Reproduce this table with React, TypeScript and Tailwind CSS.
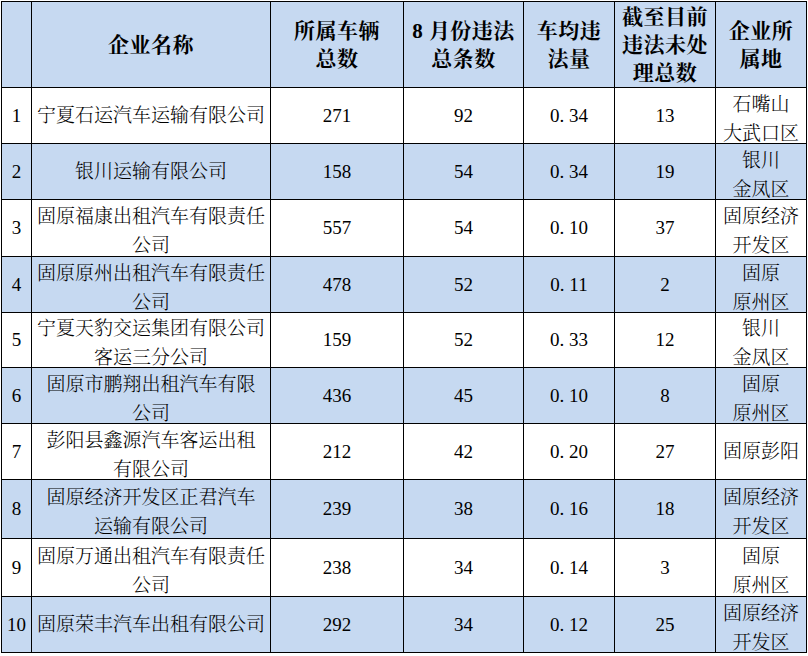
import React from "react";

type Row = {
  n: string;
  name: string[];
  cars: string;
  total: string;
  avg: string;
  pending: string;
  loc: string[];
};

const rows: Row[] = [
  { n: "1", name: ["宁夏石运汽车运输有限公司"], cars: "271", total: "92", avg: "0. 34", pending: "13", loc: ["石嘴山", "大武口区"] },
  { n: "2", name: ["银川运输有限公司"], cars: "158", total: "54", avg: "0. 34", pending: "19", loc: ["银川", "金凤区"] },
  { n: "3", name: ["固原福康出租汽车有限责任", "公司"], cars: "557", total: "54", avg: "0. 10", pending: "37", loc: ["固原经济", "开发区"] },
  { n: "4", name: ["固原原州出租汽车有限责任", "公司"], cars: "478", total: "52", avg: "0. 11", pending: "2", loc: ["固原", "原州区"] },
  { n: "5", name: ["宁夏天豹交运集团有限公司", "客运三分公司"], cars: "159", total: "52", avg: "0. 33", pending: "12", loc: ["银川", "金凤区"] },
  { n: "6", name: ["固原市鹏翔出租汽车有限", "公司"], cars: "436", total: "45", avg: "0. 10", pending: "8", loc: ["固原", "原州区"] },
  { n: "7", name: ["彭阳县鑫源汽车客运出租", "有限公司"], cars: "212", total: "42", avg: "0. 20", pending: "27", loc: ["固原彭阳"] },
  { n: "8", name: ["固原经济开发区正君汽车", "运输有限公司"], cars: "239", total: "38", avg: "0. 16", pending: "18", loc: ["固原经济", "开发区"] },
  { n: "9", name: ["固原万通出租汽车有限责任", "公司"], cars: "238", total: "34", avg: "0. 14", pending: "3", loc: ["固原", "原州区"] },
  { n: "10", name: ["固原荣丰汽车出租有限公司"], cars: "292", total: "34", avg: "0. 12", pending: "25", loc: ["固原经济", "开发区"] },
];

const font = {
  fontFamily: "'Liberation Serif', 'Noto Serif CJK SC', 'Noto Sans CJK SC', serif",
};

function Cell({ lines, blue, head }: { lines: string[]; blue: boolean; head?: boolean }) {
  const multi = !head && lines.length > 1;
  return (
    <div
      className={`flex flex-col items-center justify-center border-r border-b border-black text-center text-black whitespace-nowrap ${
        blue ? "bg-[#c6d9f1]" : "bg-white"
      } ${
        head
          ? "text-[21px] font-bold leading-[28px] tracking-[0.5px]"
          : multi
          ? "text-[19px] font-light leading-[29px] pt-[6px]"
          : "text-[19px] font-light leading-[28px]"
      }`}
    >
      {lines.map((l, i) => (
        <div key={i}>{l}</div>
      ))}
    </div>
  );
}

export default function App() {
  const header: string[][] = [
    [],
    ["企业名称"],
    ["所属车辆", "总数"],
    ["8 月份违法", "总条数"],
    ["车均违", "法量"],
    ["截至目前", "违法未处", "理总数"],
    ["企业所", "属地"],
  ];
  return (
    <div className="w-[808px] h-[656px] bg-white pt-[1px] pl-[1px]" style={font}>
      <div className="grid w-[806px] grid-cols-[30px_239px_133px_120px_91px_101px_91px] grid-rows-[86px_56px_56px_57px_56px_55px_56px_56px_59px_58px_56px] border-l border-t border-black">
        {header.map((h, i) => (
          <Cell key={"h" + i} lines={h} blue head />
        ))}
        {rows.map((r, idx) => {
          const blue = idx % 2 === 1;
          return (
            <React.Fragment key={r.n}>
              <Cell lines={[r.n]} blue={blue} />
              <Cell lines={r.name} blue={blue} />
              <Cell lines={[r.cars]} blue={blue} />
              <Cell lines={[r.total]} blue={blue} />
              <Cell lines={[r.avg]} blue={blue} />
              <Cell lines={[r.pending]} blue={blue} />
              <Cell lines={r.loc} blue={blue} />
            </React.Fragment>
          );
        })}
      </div>
    </div>
  );
}
